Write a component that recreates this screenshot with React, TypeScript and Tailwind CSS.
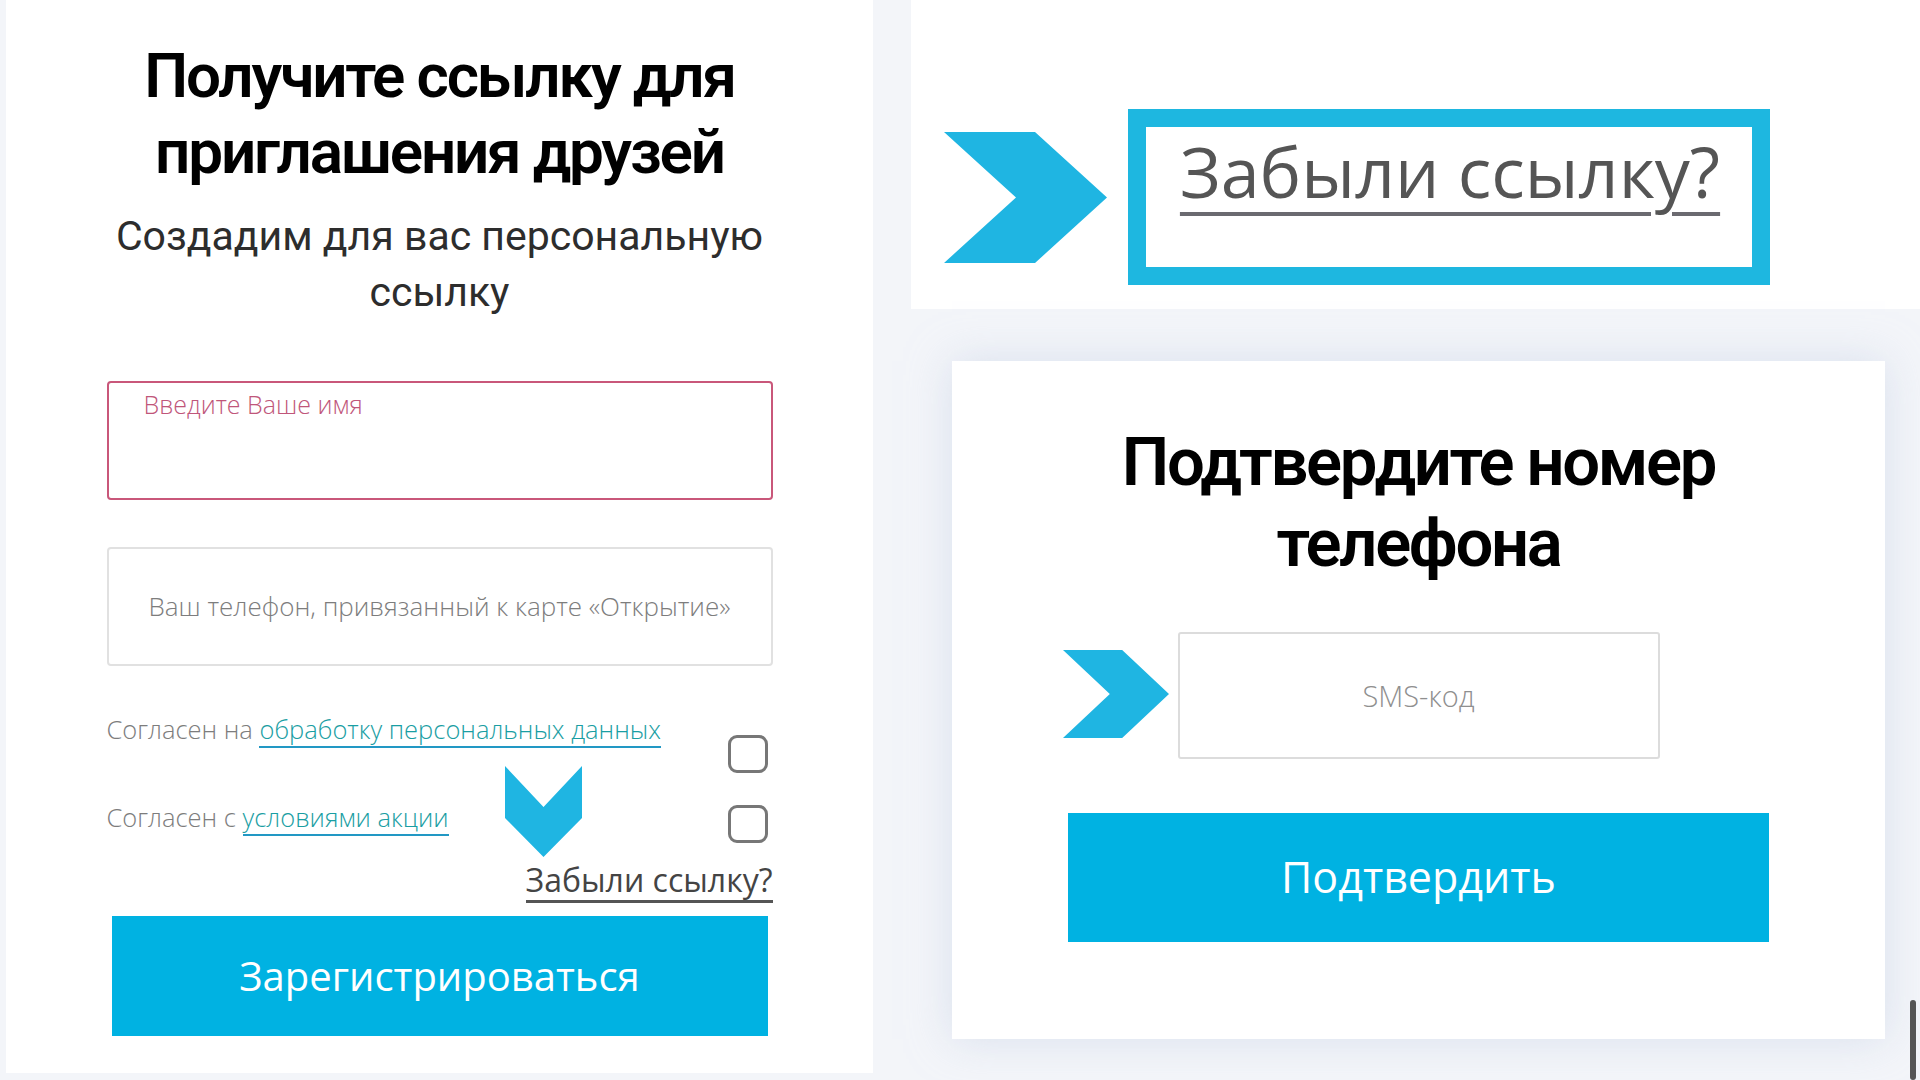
import React from 'react';

function ChevronRight({ className }: { className?: string }) {
  return (
    <svg viewBox="0 0 163 131" className={className} preserveAspectRatio="none">
      <polygon points="0,0 91,0 163,65.5 91,131 0,131 72,65.5" fill="#1fb5e2" />
    </svg>
  );
}

function ChevronDown({ className }: { className?: string }) {
  return (
    <svg viewBox="0 0 76 91" className={className} preserveAspectRatio="none">
      <polygon points="0,0 38,41 76,0 76,52 38,91 0,52" fill="#1fb5e2" />
    </svg>
  );
}

export default function App() {
  const body = { fontFamily: '"Open Sans", "Liberation Sans", sans-serif' };
  const head = { fontFamily: 'Roboto, "Liberation Sans", sans-serif' };

  return (
    <div className="relative w-[1920px] h-[1080px] overflow-hidden bg-[#f3f5f9] flex" style={body}>
      {/* left card: registration */}
      <div className="ml-[6px] w-[867px] h-[1073px] shrink-0 bg-white flex flex-col items-center px-[99px] pt-[38px]">
        <h1
          className="text-center text-[62px] leading-[76px] font-semibold tracking-[-0.035em] text-black"
          style={head}
        >
          Получите ссылку для
          <br />
          приглашения друзей
        </h1>
        <p className="mt-[18px] text-center text-[41px] leading-[56px] text-[#2d2d2d]" style={head}>
          Создадим для вас персональную
          <br />
          ссылку
        </p>

        <div className="mt-[61px] w-[666px] h-[119px] rounded-[4px] border-2 border-[#c9577a] pt-[6px] pl-[35px]">
          <span className="text-[25px] leading-[30px] font-light text-[#c0567a]">Введите Ваше имя</span>
        </div>

        <div className="mt-[47px] w-[666px] h-[119px] rounded-[4px] border-2 border-[#e1e1e1] flex items-center justify-center">
          <span className="text-[26px] font-light text-[#7d7d7d]">Ваш телефон, привязанный к карте «Открытие»</span>
        </div>

        <div className="relative w-[666px]">
          <div className="mt-[47px] h-[70px] flex justify-between items-start">
            <span className="text-[25.5px] leading-[32px] font-light text-[#7d7d7d]">
              Согласен на{' '}
              <span className="text-[#1a9ea3] border-b-2 border-[#2298c4]">обработку персональных данных</span>
            </span>
            <span className="mt-[22px] mr-[5px] w-[40px] h-[38px] rounded-[9px] border-[3px] border-[#777]" />
          </div>
          <div className="mt-[18px] h-[44px] flex justify-between items-start">
            <span className="text-[25.5px] leading-[32px] font-light text-[#7d7d7d]">
              Согласен с{' '}
              <span className="text-[#1a9ea3] border-b-2 border-[#2298c4]">условиями акции</span>
            </span>
            <span className="mt-[4px] mr-[5px] w-[40px] h-[38px] rounded-[9px] border-[3px] border-[#777]" />
          </div>
          <div className="mt-[15px] flex justify-end">
            <span className="text-[32px] leading-[40px] text-[#444] border-b-[3px] border-[#555]">Забыли ссылку?</span>
          </div>
          <ChevronDown className="absolute left-[398px] top-[100px] w-[77px] h-[91px]" />
        </div>

        <button className="mt-[13px] w-[656px] h-[120px] bg-[#00b2e2] text-white text-[40px]">
          Зарегистрироваться
        </button>
      </div>

      {/* right column */}
      <div className="ml-[38px] flex-1 flex flex-col">
        <div className="h-[309px] bg-white flex items-start pt-[109px] pl-[33px] gap-[21px]">
          <ChevronRight className="mt-[23px] w-[163px] h-[131px]" />
          <div className="w-[642px] h-[176px] border-[18px] border-[#1eb7e0] bg-white flex justify-center pt-[4px] pl-[2px]">
            <span className="text-[70px] leading-[80px] text-[#555] underline decoration-[4px] underline-offset-[14px] decoration-[#6b6a70]">
              Забыли ссылку?
            </span>
          </div>
        </div>

        <div className="ml-[41px] mt-[52px] w-[933px] h-[678px] bg-white shadow-[0_0_40px_rgba(200,210,230,0.6)] flex flex-col items-center pt-[61px]">
          <h2
            className="text-center text-[67px] leading-[81px] font-semibold tracking-[-0.035em] text-black"
            style={head}
          >
            Подтвердите номер
            <br />
            телефона
          </h2>
          <div className="relative mt-[48px] w-[482px] h-[127px] rounded-[3px] border-2 border-[#dcdcdc] flex items-center justify-center">
            <span className="text-[29px] font-light text-[#8f8f8f]">SMS-код</span>
            <ChevronRight className="absolute left-[-117px] top-[16px] w-[106px] h-[88px]" />
          </div>
          <button className="mt-[54px] w-[701px] h-[129px] bg-[#00b2e2] text-white text-[43px]">
            Подтвердить
          </button>
        </div>
      </div>

      <div className="absolute right-[4px] top-[1000px] w-[6px] h-[80px] rounded-full bg-[#555]" />
    </div>
  );
}
